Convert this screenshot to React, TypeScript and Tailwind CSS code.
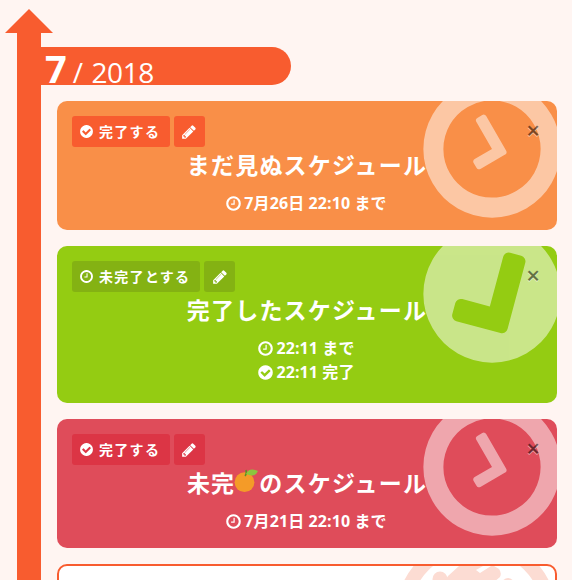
import React from "react";

const CIRCLE =
  "M1664 896q0 209-103 385.5t-279.5 279.5-385.5 103-385.5-103-279.5-279.5-103-385.5 103-385.5 279.5-279.5 385.5-103 385.5 103 279.5 279.5 103 385.5z";
const PATHS = {
  clock:
    "M1024 544v448q0 14-9 23t-23 9h-320q-14 0-23-9t-9-23v-64q0-14 9-23t23-9h224v-352q0-14 9-23t23-9h64q14 0 23 9t9 23zm416 352q0-148-73-273t-198-198-273-73-273 73-198 198-73 273 73 273 198 198 273 73 273-73 198-198 73-273zm224 0q0 209-103 385.5t-279.5 279.5-385.5 103-385.5-103-279.5-279.5-103-385.5 103-385.5 279.5-279.5 385.5-103 385.5 103 279.5 279.5 103 385.5z",
  check:
    "M1412 734q0-28-18-46l-91-90q-19-19-45-19t-45 19l-408 407-226-226q-19-19-45-19t-45 19l-91 90q-18 18-18 46 0 27 18 45l362 362q19 19 45 19 27 0 46-19l543-543q18-18 18-45z" + CIRCLE,
  pencil:
    "M491 1536l91-91-235-235-91 91v107h128v128h107zm523-928q0-22-22-22-10 0-17 7l-542 542q-7 7-7 17 0 22 22 22 10 0 17-7l542-542q7-7 7-17zm-54-192l416 416-832 832h-416v-416zm683 96q0 53-37 90l-166 166-416-416 166-165q36-38 90-38 53 0 91 38l235 234q37 39 37 91z",
};

type IconName = keyof typeof PATHS;

function Icon({ name, className }: { name: IconName; className: string }) {
  return (
    <svg viewBox="0 0 1792 1792" fill="currentColor" fillRule="evenodd" className={className}>
      <path d={PATHS[name]} />
    </svg>
  );
}

function Orange() {
  return (
    <svg viewBox="0 0 24 24" className="mr-px -ml-px inline-block size-6 align-[-1px]">
      <circle cx="10.5" cy="13.2" r="9.9" fill="#f49b28" />
      <path d="M11 7q2-2 1-6" stroke="#5c8f24" strokeWidth="1.5" fill="none" />
      <path d="M12 5q3-7 12-3-3 7-12 3z" fill="#8cc63e" />
    </svg>
  );
}

interface CardProps {
  color: string;
  buttonColor: string;
  action: string;
  actionIcon: IconName;
  mark: IconName;
  title: React.ReactNode;
  lines: { icon: IconName; text: string }[];
}

function Card({ color, buttonColor, action, actionIcon, mark, title, lines }: CardProps) {
  return (
    <article className={`relative shrink-0 overflow-hidden rounded-[10px] p-[15px] text-white ${color}`}>
      <div className="flex h-[31px] gap-1">
        <button className={`flex items-center gap-[5px] rounded-[3px] px-[7px] text-sm font-bold tracking-[1.3px] ${buttonColor}`}>
          <Icon name={actionIcon} className="size-[15px]" />
          <span className="pr-[2.7px]">{action}</span>
        </button>
        <button className={`flex w-[31px] items-center justify-center rounded-[3px] ${buttonColor}`}>
          <Icon name="pencil" className="size-4" />
        </button>
      </div>
      <h2 className="-mt-px flex h-[38px] items-center justify-center whitespace-nowrap text-[23px] font-bold tracking-[1.2px]">
        <span>{title}</span>
      </h2>
      <div className="mt-[7px]">
        {lines.map((line) => (
          <p key={line.text} className="flex h-6 items-center justify-center gap-[2px] pr-[2px] text-base font-bold tracking-[0.1px]">
            <Icon name={line.icon} className="size-[17px]" />
            <span>{line.text}</span>
          </p>
        ))}
      </div>
      <Icon name={mark} className="absolute -top-8 -right-[15px] size-40 -rotate-30 opacity-50" />
      <button className="absolute top-[17px] right-[17px] text-2xl leading-6 font-semibold text-black opacity-50 [text-shadow:0_1px_0_#fff]">
        ×
      </button>
    </article>
  );
}

export default function App() {
  return (
    <main className="flex h-[580px] w-[572px] overflow-hidden bg-[#fff5f2] font-['Open_Sans','Noto_Sans_CJK_JP',sans-serif]">
      <div className="ml-[5px] flex w-12 shrink-0 flex-col items-center pt-[9px]">
        <svg viewBox="0 0 48 24" className="h-6 w-12 shrink-0">
          <path d="M0 24L24 0l24 24z" fill="#f85c2f" />
        </svg>
        <div className="w-6 grow bg-[#f85c2f]" />
      </div>
      <div className="flex w-[504px] shrink-0 flex-col pt-[47px]">
        <header className="-ml-3 flex h-[38px] w-[250px] shrink-0 items-baseline gap-[6px] rounded-r-full bg-[#f85c2f] pl-1 text-white">
          <b className="-mt-[2px] text-[38px] leading-[46px]">7</b>
          <span className="-mt-[2px] text-[28px] leading-[46px] tracking-[-0.4px] [word-spacing:2px]">/ 2018</span>
        </header>
        <div className="mt-4 ml-1 flex flex-col gap-4">
          <Card
            color="bg-[#f98f48] h-[129px]"
            buttonColor="bg-[#f85c2f]"
            action="完了する"
            actionIcon="check"
            mark="clock"
            title="まだ見ぬスケジュール"
            lines={[{ icon: "clock", text: "7月26日 22:10 まで" }]}
          />
          <Card
            color="bg-[#94cc12] h-[157px]"
            buttonColor="bg-[#84b213]"
            action="未完了とする"
            actionIcon="clock"
            mark="check"
            title="完了したスケジュール"
            lines={[
              { icon: "clock", text: "22:11 まで" },
              { icon: "check", text: "22:11 完了" },
            ]}
          />
          <Card
            color="bg-[#df4c5a] h-[129px]"
            buttonColor="bg-[#dc3545]"
            action="完了する"
            actionIcon="check"
            mark="clock"
            title={<>未完<Orange />のスケジュール</>}
            lines={[{ icon: "clock", text: "7月21日 22:10 まで" }]}
          />
          <article className="relative h-32 shrink-0 overflow-hidden rounded-[10px] border-2 border-[#f85c2f] bg-white">
            <svg viewBox="0 0 175 120" fill="#fcdcd3" className="absolute top-0 right-0 h-[120px] w-[175px]">
              <circle cx="96.5" cy="51" r="74" fill="none" stroke="#fcdcd3" strokeWidth="14" />
              <circle cx="60" cy="13" r="7.5" />
              <path d="M79 0L68 10 64 16V40h50V16l6-5q2-4-1-8l-5-3h-3L100 7l-4-3 7-4z" />
              <circle cx="128" cy="18" r="6" />
            </svg>
          </article>
        </div>
      </div>
    </main>
  );
}
